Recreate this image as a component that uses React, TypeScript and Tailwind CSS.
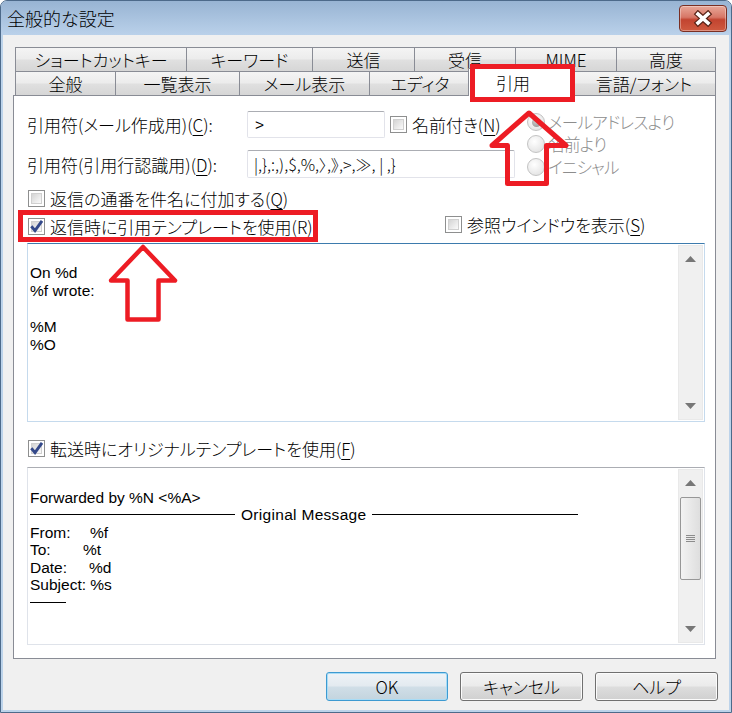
import React from 'react';

const TAB_ROW1: [string, number][] = [
  ['ショートカットキー', 171],
  ['キーワード', 126],
  ['送信', 102],
  ['受信', 101],
  ['MIME', 101],
  ['高度', 100],
];

const TAB_ROW2: [string, number][] = [
  ['全般', 100],
  ['一覧表示', 124],
  ['メール表示', 130],
  ['エディタ', 101],
  ['引用', 102],
  ['言語/フォント', 144],
];

const QUOTE_MARKS = '|,},:,),$,%,〉,》,>,≫, | ,}';

const TAB_BG =
  'bg-[linear-gradient(#f4f4f4_0%,#ececec_48%,#e0e0e0_52%,#d6d6d6_100%)]';

// template text uses a narrow Latin face, like the original edit boxes
const MEMO = "[font-family:'Liberation_Sans','Noto_Sans_CJK_JP',sans-serif] text-[15.5px]";

function Mn({ c }: { c: string }) {
  return <span className="underline underline-offset-[3px]">{c}</span>;
}

function CheckBox({ checked }: { checked?: boolean }) {
  return (
    <span className="relative flex h-[17px] w-[17px] shrink-0 items-center justify-center border border-[#8e8f8f] bg-white">
      <span className="absolute inset-[2px] border border-[#d0d0d0] bg-gradient-to-br from-[#d4d4d4] to-[#fbfbfb]" />
      {checked && (
        <svg className="relative" width="15" height="15" viewBox="0 0 15 15">
          <path d="M2.3 7.3 L6 11.6 L13 1.8" fill="none" stroke="#34498a" strokeWidth="2.9" />
        </svg>
      )}
    </span>
  );
}

function Radio({ on }: { on?: boolean }) {
  return (
    <span className="flex h-[18px] w-[18px] shrink-0 items-center justify-center rounded-full border border-[#c3c3c3] bg-[radial-gradient(circle_at_40%_35%,#ffffff,#dcdcdc)]">
      {on && (
        <span className="h-[9px] w-[9px] rounded-full bg-[radial-gradient(circle_at_40%_35%,#cfcfcf,#8c8c8c)]" />
      )}
    </span>
  );
}

function Arrow({ up }: { up?: boolean }) {
  return (
    <svg width="11" height="6" viewBox="0 0 11 6">
      <path d={up ? 'M0 6 L5.5 0 L11 6Z' : 'M0 0 L11 0 L5.5 6Z'} fill="#777777" />
    </svg>
  );
}

function ScrollBar({ thumb }: { thumb?: boolean }) {
  return (
    <div className="my-px mr-px flex w-[25px] shrink-0 flex-col border border-[#e9e9e9] bg-[#f0f0f0]">
      <div className="flex h-[26px] items-center justify-center">
        <Arrow up />
      </div>
      <div className="flex flex-1 flex-col">
        {thumb && (
          <div className="mx-px mt-px flex h-[83px] flex-col items-center justify-center gap-px rounded-[2px] border border-[#979797] bg-[linear-gradient(90deg,#f3f3f3,#dedede)]">
            <span className="h-px w-[9px] bg-[#8c8c8c]" />
            <span className="h-px w-[9px] bg-[#8c8c8c]" />
            <span className="h-px w-[9px] bg-[#8c8c8c]" />
            <span className="h-px w-[9px] bg-[#8c8c8c]" />
          </div>
        )}
      </div>
      <div className="flex h-[26px] items-center justify-center">
        <Arrow />
      </div>
    </div>
  );
}

function Tab({ label, w, last }: { label: string; w: number; last?: boolean }) {
  return (
    <div
      className={`flex h-[24px] shrink-0 items-center justify-center border-l border-t border-[#898c95] ${TAB_BG} text-[17px] leading-none ${
        last ? 'border-r' : ''
      }`}
      style={{ width: w }}
    >
      {label}
    </div>
  );
}

function Button({ children, primary }: { children: React.ReactNode; primary?: boolean }) {
  return (
    <button
      className={
        primary
          ? 'flex h-[29px] w-full items-center justify-center rounded-[3px] border border-[#3d9ad1] bg-[linear-gradient(#eef3f7_0%,#e3eaf0_48%,#d0dee7_52%,#c3d4de_100%)] text-[17px] leading-none shadow-[inset_0_0_0_1px_#a8dcf6]'
          : 'flex h-[29px] w-full items-center justify-center rounded-[3px] border border-[#707070] bg-[linear-gradient(#f3f3f3_0%,#ebebeb_48%,#dddddd_52%,#d0d0d0_100%)] text-[17px] leading-none shadow-[inset_0_0_0_1px_#fbfbfb]'
      }
    >
      {children}
    </button>
  );
}

export default function App() {
  return (
    <div className="relative h-[713px] w-[732px] font-[300] text-black [font-family:'Noto_Sans_CJK_JP',sans-serif] [font-feature-settings:'palt']">
      <div className="flex h-[713px] w-[732px] flex-col overflow-hidden rounded-t-[7px] border border-[#4d6a8a] bg-[#bcd3ea]">
        {/* title bar */}
        <div className="flex h-[34px] shrink-0 items-center justify-between bg-gradient-to-b from-[#98b4d3] to-[#bad1ea] pl-[6px] pr-[4px]">
          <span className="text-[18px] leading-none">全般的な設定</span>
          <div className="flex h-[27px] w-[48px] items-center justify-center rounded-[4px] border border-[#7a2f23] bg-[linear-gradient(#e8a899_0%,#d77666_45%,#c24430_55%,#cf5a40_100%)] shadow-[inset_0_0_0_1px_rgba(255,255,255,0.35)]">
            <svg width="20" height="17" viewBox="0 0 20 17">
              <path d="M5 4 L15 13 M15 4 L5 13" stroke="#5a2418" strokeWidth="6" strokeLinecap="square" />
              <path d="M5 4 L15 13 M15 4 L5 13" stroke="#ffffff" strokeWidth="3.6" strokeLinecap="square" />
            </svg>
          </div>
        </div>

        {/* client area */}
        <div className="mx-[2px] mb-[2px] flex flex-1 flex-col bg-[#f0f0f0]">
          {/* tabs */}
          <div className="ml-[12px] mt-[12px] flex flex-col">
            <div className="flex">
              {TAB_ROW1.map(([l, w], i) => (
                <Tab key={l} label={l} w={w} last={i === TAB_ROW1.length - 1} />
              ))}
            </div>
            <div className="flex h-[24px] items-end">
              {TAB_ROW2.map(([l, w], i) =>
                l === '引用' ? (
                  <div
                    key={l}
                    className="relative top-px z-10 -mx-[2px] flex h-[28px] w-[106px] shrink-0 items-center border border-b-0 border-[#898c95] bg-white pl-[27px] text-[17px] leading-none"
                  >
                    {l}
                  </div>
                ) : (
                  <Tab key={l} label={l} w={w} last={i === TAB_ROW2.length - 1} />
                )
              )}
            </div>
          </div>

          {/* panel */}
          <div className="ml-[10px] flex h-[564px] w-[703px] flex-col border border-[#898c95] bg-white pl-[13px] pt-[15px] text-[17px] leading-none">
            <div className="flex h-[67px]">
              <div className="flex w-[500px] flex-col">
                <div className="flex h-[27px] items-center">
                  <span className="w-[220px]">
                    引用符(メール作成用)(<Mn c="C" />):
                  </span>
                  <div className={`flex h-[27px] w-[138px] items-center rounded-[2px] border border-[#e2e3ea] border-t-[#abadb3] pl-[7px] ${MEMO}`}>
                    &gt;
                  </div>
                  <div className="ml-[5px] flex items-center gap-[5px]">
                    <CheckBox />
                    <span>
                      名前付き(<Mn c="N" />)
                    </span>
                  </div>
                </div>
                <div className="mt-[12px] flex h-[28px] items-center">
                  <span className="w-[220px]">
                    引用符(引用行認識用)(<Mn c="D" />):
                  </span>
                  <div className="flex h-[28px] w-[268px] items-center rounded-[2px] border border-[#e2e3ea] border-t-[#abadb3] pl-[6px] text-[16px]">
                    {QUOTE_MARKS}
                  </div>
                </div>
              </div>
              <div className="flex flex-col text-[16.5px] tracking-[-0.6px] text-[#8d8d8d]">
                <div className="flex h-[23.5px] items-center gap-[3px]">
                  <Radio on />
                  <span>メールアドレスより</span>
                </div>
                <div className="flex h-[23.5px] items-center gap-[3px]">
                  <Radio />
                  <span>名前より</span>
                </div>
                <div className="flex h-[23.5px] items-center gap-[3px]">
                  <Radio />
                  <span>イニシャル</span>
                </div>
              </div>
            </div>

            <div className="mt-[11px] flex h-[18px] items-center gap-[5px] pl-px">
              <CheckBox />
              <span>
                返信の通番を件名に付加する(<Mn c="Q" />)
              </span>
            </div>

            <div className="mt-[10px] flex h-[18px] items-center">
              <div className="flex w-[418px] items-center gap-[5px] pl-px">
                <CheckBox checked />
                <span>
                  返信時に引用テンプレートを使用(<Mn c="R" />)
                </span>
              </div>
              <div className="-mt-[3px] flex items-center gap-[5px]">
                <CheckBox />
                <span>
                  参照ウインドウを表示(<Mn c="S" />)
                </span>
              </div>
            </div>

            {/* reply template */}
            <div className="mt-[8px] flex h-[179px] w-[678px] border border-[#c5daed] border-t-[#3d7bad] bg-white">
              <div className={`flex-1 whitespace-pre pl-[2px] pt-[2px] leading-[18px] ${MEMO}`}>
                <div className="h-[18px]" />
                <div>On %d</div>
                <div>%f wrote:</div>
                <div className="h-[18px]" />
                <div>%M</div>
                <div>%O</div>
              </div>
              <ScrollBar />
            </div>

            <div className="mt-[17px] flex h-[18px] items-center gap-[5px] pl-px">
              <CheckBox checked />
              <span>
                転送時にオリジナルテンプレートを使用(<Mn c="F" />)
              </span>
            </div>

            {/* forward template */}
            <div className="mt-[10px] flex h-[178px] w-[678px] border border-[#dfe3ea] border-t-[#abadb3] bg-white">
              <div className={`flex-1 whitespace-pre pl-[2px] pt-[3px] leading-[17.5px] ${MEMO}`}>
                <div className="h-[17.5px]" />
                <div className="h-[17.5px]">Forwarded by %N &lt;%A&gt;</div>
                <div className="flex h-[17.5px] items-center">
                  <span className="h-px w-[205px] bg-black" />
                  <span className="px-[6px] tracking-[0.3px]">Original Message</span>
                  <span className="h-px w-[206px] bg-black" />
                </div>
                <div className="h-[17.5px]">
                  <span className="inline-block w-[60px]">From:</span>%f
                </div>
                <div className="h-[17.5px]">
                  <span className="inline-block w-[53px]">To:</span>%t
                </div>
                <div className="h-[17.5px]">
                  <span className="inline-block w-[59px]">Date:</span>%d
                </div>
                <div className="h-[17.5px]">Subject: %s</div>
                <div className="flex h-[17.5px] items-center">
                  <span className="h-px w-[36px] bg-black" />
                </div>
              </div>
              <ScrollBar thumb />
            </div>
          </div>

          {/* buttons */}
          <div className="mt-[13px] flex justify-end gap-[12px] pr-[11px]">
            <div className="w-[122px]">
              <Button primary>OK</Button>
            </div>
            <div className="w-[123px]">
              <Button>キャンセル</Button>
            </div>
            <div className="w-[123px]">
              <Button>ヘルプ</Button>
            </div>
          </div>
        </div>
      </div>

      {/* red annotations */}
      <svg
        className="pointer-events-none absolute left-0 top-0 z-20"
        width="732"
        height="713"
        viewBox="0 0 732 713"
      >
        <rect x="472.5" y="66.5" width="100" height="33" fill="none" stroke="#ed1c24" strokeWidth="5" />
        <rect x="20.5" y="212.5" width="295" height="27" fill="none" stroke="#ed1c24" strokeWidth="5" />
        <polygon
          points="529,113 566,145.5 546.5,145.5 546.5,183.5 507.5,183.5 507.5,145.5 492,145.5"
          fill="none"
          stroke="#ed1c24"
          strokeWidth="5"
          strokeLinejoin="round"
        />
        <polygon
          points="143,247 175,280.5 158.5,280.5 158.5,319.5 127.5,319.5 127.5,280.5 111,280.5"
          fill="none"
          stroke="#ed1c24"
          strokeWidth="4.5"
          strokeLinejoin="round"
        />
      </svg>
    </div>
  );
}
